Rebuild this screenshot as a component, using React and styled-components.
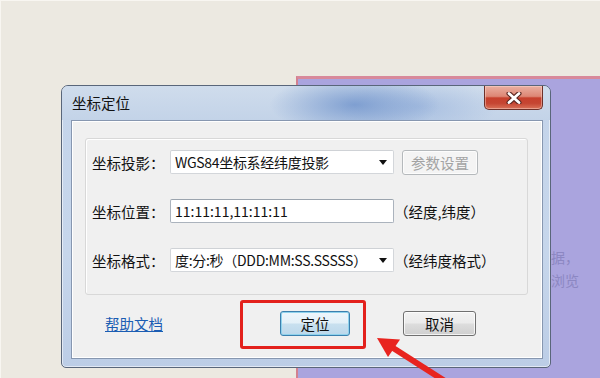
import React from 'react';
import styled, { createGlobalStyle } from 'styled-components';

const Global = createGlobalStyle`
  html, body { margin: 0; padding: 0; }
  body {
    background: #ece9e1;
    font-family: "Noto Sans CJK SC", "Noto Sans", sans-serif;
  }
`;

const Desktop = styled.div`
  position: relative;
  width: 600px;
  height: 378px;
  overflow: hidden;
  background: #ece9e1;
  box-shadow: inset 0 1px 0 #f8f6f1, inset 1px 0 0 #f8f6f1;
`;

const BackWindow = styled.div`
  position: absolute;
  left: 296px;
  top: 76px;
  right: 0;
  bottom: 0;
  background: #aaa4de;
  border-top: 3px solid #d8899b;
  border-left: 2px solid #d3808f;
  padding: 167px 0 0 239px;
  font-size: 14px;
  line-height: 23px;
  color: #8c87c2;
`;

const HintLine = styled.div`
  white-space: nowrap;
`;

const Dialog = styled.div`
  position: absolute;
  left: 61px;
  top: 85px;
  width: 490px;
  height: 283px;
  box-sizing: border-box;
  border: 1px solid #59667a;
  border-radius: 7px 7px 5px 5px;
  background: linear-gradient(180deg, #c4d4ea 0%, #c6d6eb 60%, #bccde6 100%);
  box-shadow: inset 0 0 0 1px rgba(255, 255, 255, 0.55);
  display: flex;
  flex-direction: column;
  padding: 0 7px 8px 9px;
`;

const TitleBar = styled.div`
  height: 34px;
  margin: 0 -7px 0 -9px;
  padding-left: 10px;
  display: flex;
  align-items: flex-start;
  border-radius: 6px 6px 0 0;
  background:
    radial-gradient(ellipse 85px 30px at 60% 55%, rgba(110, 146, 203, 0.8), rgba(110, 146, 203, 0) 100%),
    radial-gradient(ellipse 80px 28px at 73% 60%, rgba(148, 176, 219, 0.6), rgba(148, 176, 219, 0) 100%),
    linear-gradient(180deg, #cfdcec 0%, #c3d3e8 100%);
`;

const Title = styled.div`
  flex: 1;
  align-self: center;
  font-size: 14.5px;
  color: #111;
  padding-bottom: 1px;
`;

const CloseButton = styled.div`
  width: 59px;
  height: 24px;
  margin-right: 7px;
  box-sizing: border-box;
  border: 1px solid #6e3029;
  border-top: none;
  border-radius: 0 0 5px 5px;
  background: linear-gradient(180deg, #eab0a2 0%, #dd8674 45%, #c7402d 52%, #c54532 75%, #d97259 100%);
  box-shadow: inset 0 0 0 1px rgba(255, 220, 210, 0.45);
  display: flex;
  align-items: center;
  justify-content: center;
`;

const Client = styled.div`
  flex: 1;
  border: 1px solid #8797b0;
  background: #f0f0f0;
  box-shadow: inset 0 0 0 1px #ffffff;
  display: flex;
  flex-direction: column;
  padding: 17px 14px 0 13px;
`;

const Group = styled.div`
  height: 157px;
  box-sizing: border-box;
  border: 1px solid #d8d8d8;
  border-radius: 3px;
  box-shadow: inset 1px 1px 0 #ffffff;
  display: grid;
  grid-template-columns: 78px 224px auto;
  grid-auto-rows: 24px;
  align-content: start;
  align-items: center;
  row-gap: 25px;
  padding: 11px 0 0 6px;
`;

const Label = styled.div`
  font-size: 14.5px;
  color: #111;
  white-space: nowrap;
`;

const Field = styled.div`
  height: 24px;
  box-sizing: border-box;
  background: #ffffff;
  border: 1px solid ${p => (p.$combo ? '#d3d6da' : '#abb3bd')};
  border-top-color: ${p => (p.$combo ? '#cfd2d6' : '#9ba4ae')};
  border-radius: 2px;
  display: flex;
  align-items: center;
  padding-left: 4px;
  font-size: 14px;
  color: #111;
  white-space: nowrap;
  overflow: hidden;
`;

const FieldText = styled.span`
  flex: 1;
  overflow: hidden;
  letter-spacing: ${p => (p.$tight ? '-0.3px' : '0')};
`;

const DropArrow = styled.span`
  width: 0;
  height: 0;
  border-left: 4px solid transparent;
  border-right: 4px solid transparent;
  border-top: 5px solid #111;
  margin-right: 6px;
`;

const Note = styled.div`
  font-size: 14.5px;
  color: #111;
  white-space: nowrap;
`;

const Button = styled.div`
  width: ${p => p.$w}px;
  height: 25px;
  margin-left: ${p => p.$ml || 0}px;
  box-sizing: border-box;
  border: 1px solid ${p => (p.$disabled ? '#b5b9bc' : p.$default ? '#3b80ae' : '#707070')};
  border-radius: 3px;
  background: ${p =>
    p.$disabled
      ? '#f4f4f4'
      : p.$default
      ? 'linear-gradient(180deg, #eef6fb 0%, #e3f0f8 48%, #c8e0ef 52%, #bcd8eb 100%)'
      : 'linear-gradient(180deg, #f3f3f3 0%, #ebebeb 48%, #dddddd 52%, #cfcfcf 100%)'};
  box-shadow: inset 0 0 0 1px ${p => (p.$default ? '#8fd2ec' : 'rgba(255,255,255,0.75)')};
  display: flex;
  align-items: center;
  justify-content: center;
  font-size: 14.5px;
  color: ${p => (p.$disabled ? '#a3a3a3' : '#111')};
`;

const Footer = styled.div`
  flex: 1;
  display: flex;
  align-items: center;
  padding: 0 0 6px 20px;
`;

const HelpLink = styled.a`
  font-size: 14.5px;
  color: #1b5db3;
  text-decoration: underline;
  white-space: nowrap;
  width: 56px;
`;

const Highlight = styled.div`
  position: absolute;
  left: 240px;
  top: 300px;
  width: 126px;
  height: 49px;
  box-sizing: border-box;
  border: 3px solid #e3211c;
  border-radius: 3px;
`;

const Overlay = styled.svg`
  position: absolute;
  left: 0;
  top: 0;
  pointer-events: none;
`;

export default function App() {
  return (
    <>
      <Global />
      <Desktop>
        <BackWindow>
          <HintLine>数据，</HintLine>
          <HintLine>可浏览</HintLine>
        </BackWindow>

        <Dialog>
          <TitleBar>
            <Title>坐标定位</Title>
            <CloseButton>
              <svg width="16" height="12" viewBox="0 0 16 12">
                <path d="M3 1.5 L13 10.5 M13 1.5 L3 10.5" stroke="#5a2620" strokeWidth="5" strokeLinecap="round" />
                <path d="M3 1.5 L13 10.5 M13 1.5 L3 10.5" stroke="#ffffff" strokeWidth="2.8" strokeLinecap="round" />
              </svg>
            </CloseButton>
          </TitleBar>
          <Client>
            <Group>
              <Label>坐标投影：</Label>
              <Field $combo>
                <FieldText $tight>WGS84坐标系经纬度投影</FieldText>
                <DropArrow />
              </Field>
              <Button $w={76} $ml={8} $disabled>参数设置</Button>

              <Label>坐标位置：</Label>
              <Field>
                <FieldText>11:11:11,11:11:11</FieldText>
              </Field>
              <Note>（经度,纬度）</Note>

              <Label>坐标格式：</Label>
              <Field $combo>
                <FieldText $tight>度:分:秒（DDD:MM:SS.SSSSS）</FieldText>
                <DropArrow />
              </Field>
              <Note>（经纬度格式）</Note>
            </Group>
            <Footer>
              <HelpLink href="#">帮助文档</HelpLink>
              <Button $w={70} $ml={119} $default>定位</Button>
              <Button $w={73} $ml={53}>取消</Button>
            </Footer>
          </Client>
        </Dialog>

        <Highlight />
        <Overlay width="600" height="378" viewBox="0 0 600 378">
          <line x1="390" y1="346" x2="462" y2="392" stroke="#e8241f" strokeWidth="6" />
          <polygon points="377,338 400,339.5 388,357" fill="#e8241f" />
        </Overlay>
      </Desktop>
    </>
  );
}
